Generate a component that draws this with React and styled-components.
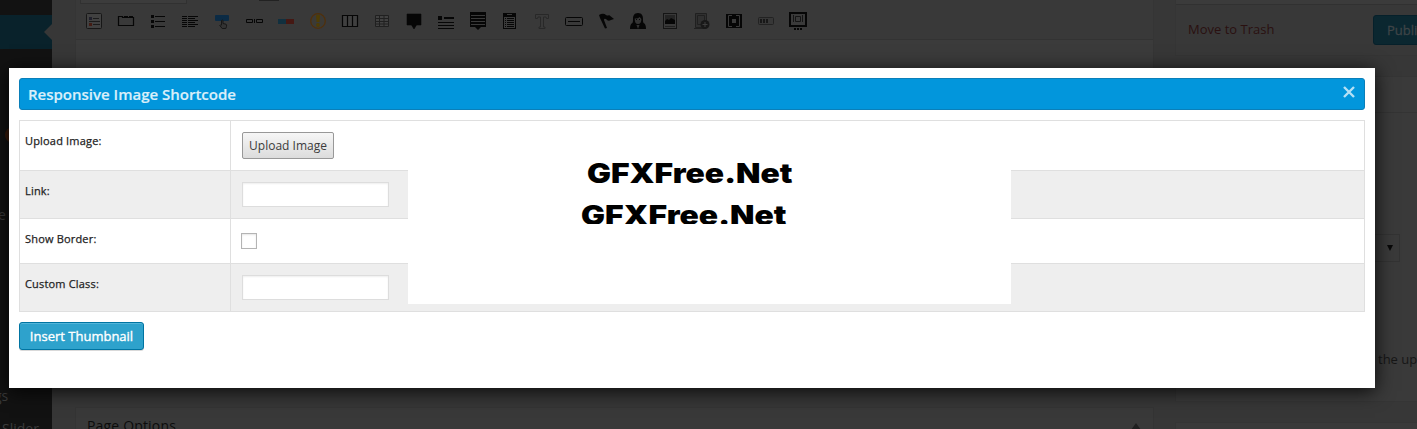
import React from 'react';
import styled, { createGlobalStyle } from 'styled-components';

const Global = createGlobalStyle`
  * { box-sizing: border-box; }
  body { margin: 0; background: #373737; font-family: "Open Sans", sans-serif; }
`;

const Screen = styled.div`
  position: relative;
  width: 1417px;
  height: 429px;
  overflow: hidden;
  display: flex;
  background: #373737;
`;

const Sidebar = styled.nav`
  width: 52px;
  flex: none;
  height: 429px;
  overflow: hidden;
  background: #121212;
  display: flex;
  flex-direction: column;
  color: #3a3a3a;
  font-size: 14px;
  line-height: 20px;
  white-space: nowrap;
`;

const ActiveItem = styled.div`
  height: 34px;
  flex: none;
  margin-top: 15px;
  background: #09222b;
  display: flex;
  align-items: center;
  justify-content: flex-end;
  &::after {
    content: '';
    border: 8px solid transparent;
    border-left: 0;
    border-right-color: #373737;
  }
`;

const Bubble = styled.i`
  width: 16px;
  height: 16px;
  flex: none;
  border-radius: 50%;
  background: #3a1a0a;
  margin: 78px 0 0 5px;
`;

const MenuText = styled.span`
  flex: none;
  margin-top: ${(p) => p.$gap}px;
  margin-left: ${(p) => p.$x}px;
`;

const Main = styled.main`
  width: 1079px;
  flex: none;
  margin-left: 23px;
  display: flex;
  flex-direction: column;
`;

const Editor = styled.section`
  height: 384px;
  flex: none;
  background: #3b3b3b;
  border: 1px solid #353535;
  border-width: 0 1px;
`;

const EditorTop = styled.div`
  height: 40px;
  background: #393939;
  border-bottom: 1px solid #333;
`;

const ModeTabs = styled.div`
  height: 4px;
  display: flex;
  align-items: flex-start;
  padding-left: 4px;
`;

const ModeBox = styled.div`
  width: 107px;
  height: 4px;
  background: #3c3c3c;
  border: 1px solid #313131;
  border-top: 0;
`;

const ModeMark = styled.div`
  width: 20px;
  height: 1px;
  margin-left: 72px;
  background: #222;
`;

const Toolbar = styled.div`
  display: flex;
  padding: 7px 0 0 2px;
`;

const Tool = styled.span`
  width: 32px;
  height: 20px;
  display: flex;
  justify-content: center;
  svg { display: block; }
`;

const OptionsPanel = styled.section`
  height: 40px;
  flex: none;
  margin-top: 23px;
  background: #393939;
  border: 1px solid #343434;
  display: flex;
  justify-content: space-between;
  padding: 8px 12px 0 11px;
  font-size: 14px;
  letter-spacing: 0.17px;
  line-height: 20px;
  color: #0c0c0c;
`;

const Toggle = styled.i`
  margin-top: 7px;
  width: 0;
  height: 0;
  border: 5px solid transparent;
  border-top: 0;
  border-bottom: 7px solid #202020;
`;

const Side = styled.aside`
  width: 260px;
  flex: none;
  margin-left: 21px;
  display: flex;
  flex-direction: column;
  font-size: 13px;
`;

const PublishBox = styled.section`
  height: 56px;
  flex: none;
  background: #383838;
  border: 1px solid #353535;
  border-top: 0;
`;

const PublishTop = styled.div`
  height: 4px;
  background: #3b3b3b;
`;

const PublishFooter = styled.div`
  height: 51px;
  border-top: 1px solid #313131;
  display: flex;
  justify-content: space-between;
  padding: 10px 7px 0 12px;
`;

const Trash = styled.span`
  color: #2a1010;
  line-height: 29px;
`;

const Publish = styled.span`
  width: 54px;
  height: 30px;
  border: 1px solid #06202a;
  border-radius: 3px;
  background: #0b2730;
  color: #3e4447;
  padding-left: 13px;
  -webkit-text-stroke: 0.3px currentColor;
  line-height: 29px;
  overflow: hidden;
`;

const SidePanel = styled.section`
  height: ${(p) => p.$h}px;
  flex: none;
  margin-top: 20px;
  background: #3a3a3a;
  border: 1px solid #353535;
  color: #161616;
`;

const PanelHead = styled.div`
  height: 36px;
  border-bottom: 1px solid #343434;
`;

const Select = styled.div`
  width: 213px;
  height: 28px;
  margin: 121px 0 0 11px;
  border: 1px solid #333;
  display: flex;
  justify-content: flex-end;
  align-items: center;
  padding-right: 6px;
  &::after {
    content: '';
    border: 3px solid transparent;
    border-top: 6px solid #080808;
    border-bottom: 0;
  }
`;

const Hint = styled.p`
  margin: 87px 0 0 202px;
  line-height: 20px;
  white-space: nowrap;
  overflow: hidden;
`;

const Modal = styled.div`
  position: absolute;
  left: 9px;
  top: 68px;
  width: 1366px;
  height: 320px;
  padding: 10px;
  background: #fff;
  box-shadow: 0 3px 18px rgba(0, 0, 0, 0.85);
`;

const TitleBar = styled.header`
  height: 32px;
  display: flex;
  justify-content: space-between;
  background: #0296dc;
  border: 1px solid #0a7fb9;
  border-radius: 3px;
  color: #d9effa;
  padding: 0 9px 0 8px;
  font-size: 15px;
  font-weight: 600;
  -webkit-text-stroke: 0.2px currentColor;
  line-height: 31px;
`;

const CloseIcon = styled.svg`
  display: block;
  margin-top: 7px;
`;

const Form = styled.div`
  margin-top: 10px;
  border: 1px solid #dfdfdf;
  height: 192px;
`;

const Row = styled.div`
  display: flex;
  height: ${(p) => p.$h}px;
  background: ${(p) => (p.$alt ? '#eee' : '#fff')};
  border-bottom: ${(p) => (p.$last ? 0 : '1px solid #dfdfdf')};
`;

const Label = styled.label`
  width: 211px;
  flex: none;
  border-right: 1px solid #dfdfdf;
  padding: 12px 0 0 5px;
  font-size: 11px;
  letter-spacing: 0.18px;
  -webkit-text-stroke: 0.25px currentColor;
  line-height: 16px;
  color: #222;
`;

const Field = styled.div`
  padding: 11px 0 0 ${(p) => p.$x || 11}px;
`;

const UploadButton = styled.button`
  display: block;
  width: 92px;
  height: 27px;
  padding: 0;
  border: 1px solid #989898;
  border-radius: 2px;
  background: linear-gradient(#f6f6f6, #dcdcdc);
  font: 12px/25px "Open Sans", sans-serif;
  color: #3c3c3c;
`;

const TextInput = styled.input`
  display: block;
  width: 147px;
  height: 25px;
  border: 1px solid #ddd;
  background: #fff;
  box-shadow: inset 0 1px 2px rgba(0, 0, 0, 0.07);
`;

const Check = styled.input`
  appearance: none;
  display: block;
  margin: 3px 0 0;
  width: 16px;
  height: 16px;
  border: 1px solid #b4b4b4;
  background: #fff;
  box-shadow: inset 0 1px 2px rgba(0, 0, 0, 0.1);
`;

const InsertButton = styled.button`
  display: block;
  margin-top: 10px;
  width: 125px;
  height: 28px;
  padding: 0;
  border: 1px solid #0074a2;
  border-radius: 3px;
  background: #2ea2cc;
  box-shadow: inset 0 1px 0 rgba(120, 200, 230, 0.5), 0 1px 0 rgba(0, 0, 0, 0.15);
  color: #fff;
  font: 13px/26px "Open Sans", sans-serif;
  -webkit-text-stroke: 0.35px currentColor;
`;

const Cover = styled.div`
  position: absolute;
  left: 399px;
  top: 54px;
  width: 603px;
  height: 182px;
  background: #fff;
`;

const Watermark = styled.div`
  height: ${(p) => p.$h}px;
  margin-left: ${(p) => p.$x}px;
  margin-top: ${(p) => p.$gap}px;
  overflow: hidden;
  font: 900 26.5px/32px Inter, sans-serif;
  color: #000;
  white-space: nowrap;
  span {
    display: inline-block;
    transform: scaleX(${(p) => p.$stretch});
    transform-origin: 0 0;
  }
`;

const K = '#060606';
const bars = (x, w, ys, h = 1, fill = K) =>
  ys.map((y) => <rect key={`${x}-${y}`} x={x} y={y} width={w} height={h} fill={fill} />);

const icons = [
  <>
    <rect x="2.5" y="2.5" width="15" height="15" rx="1" fill="#414141" stroke="#171717" />
    <path d="M5 6h3v3H5z" fill="#20202c" /><path d="M5 12h3v3H5z" fill="#431c14" />
    <path d="M9 7.5h6M5 10.5h11M9 13.5h7" stroke="#1b1b1b" />
  </>,
  <>
    <path d="M2.500 5.500v9h15v-8h-11v-1z" fill="none" stroke={K} strokeWidth="1.200" />
    <path d="M8 5h4v2H8zM13 5h4v2h-4z" fill={K} />
  </>,
  <>{bars(3, 3, [4, 9, 14], 3)}{bars(7, 10, [5, 10, 15])}</>,
  <>{bars(2, 5, [5, 7, 9, 11, 13, 15])}{bars(8, 10, [5, 9, 13])}{bars(8, 7, [7, 11, 15])}</>,
  <>
    <rect x="3" y="4" width="14" height="6" rx="1" fill="#0b2b45" />
    <path d="M9.500 14V9.500q1-1 1.500 0v3l3 .7q1 .3.500 2.300l-.7 2h-3.600L7.800 14.500q.3-1 1.700-.3" fill="#333" stroke="#171717" />
  </>,
  <path d="M2.500 8.500h6v3h-6zM12.500 8.500h6v3h-6zM10.500 8v4" fill="none" stroke={K} />,
  <><path d="M2 8h8v5H2z" fill="#11303f" /><path d="M10 8h8v5h-8z" fill="#451813" /></>,
  <>
    <circle cx="10" cy="10" r="7.300" fill="#3b3a36" stroke="#50300c" strokeWidth="1.300" />
    <path d="M8 4.500q2-1.500 4 0L11.400 11H8.600z" fill="#4f3d04" /><circle cx="10" cy="14" r="1.900" fill="#4f3d04" />
  </>,
  <path d="M2.500 4.500h15v11h-15zM7.500 4v12M12.500 4v12" fill="#404040" stroke={K} strokeWidth="1.200" />,
  <path d="M3.500 4.500h13v11h-13zM3 7.500h14M3 10.500h14M3 13h14M7.500 4v12M12 4v12" fill="#414141" stroke="#202020" />,
  <path d="M3 3h14v11h-4.500L10 18l-2.500-4H3z" fill={K} stroke={K} strokeLinejoin="round" strokeWidth=".6" />,
  <>{bars(2, 4, [5], 4)}{bars(8, 10, [6], 2)}{bars(2, 16, [11, 14, 17])}</>,
  <><path d="M2 1h16v15h-5l-3 3-3-3H2z" fill={K} />{bars(3, 14, [4, 7, 10, 13], 1, '#3a3a3a')}</>,
  <>
    <path d="M3 2h13v16H3z" fill={K} /><path d="M7 3.500h5" stroke="#3a3a3a" /><path d="M4 6h11v11H4z" fill="#3a3a3a" />
    {bars(5, 1, [7, 9, 11, 13, 15], 1, K)}{bars(7, 7, [7, 9, 11, 13, 15], 1, K)}
  </>,
  <path d="M3.500 3.500h13v4h-2l-.5-1.500h-2.500v10h1.500v1.500H7V16h1.500V6H6l-.5 1.500h-2z" fill="none" stroke="#282828" />,
  <><rect x="1.500" y="6.500" width="17" height="8" rx="1" fill="none" stroke={K} /><path d="M4 10.500h12" stroke={K} /></>,
  <path d="M3 4l2-1q3-1 5 1 2 1 3 0l5 4-3 1q-3 2-5-1-2-1-2 1l3 8-2 .5L4 7z" fill={K} />,
  <>
    <path d="M10 2c4 0 5 3 5 6 0 2 0 3 .6 4q2.400 1 2.400 6H2q0-5 2.400-6C5 11 5 10 5 8c0-3 1-6 5-6z" fill={K} />
    <path d="M6.700 7.500q3 .3 5-1.500l1.700 2q0 5-3.400 5t-3.300-5.500zM8.500 14h3L10 18z" fill="#333" />
    <path d="M8 8.500h1M11 8.500h1" stroke={K} />
  </>,
  <>
    <rect x="3.500" y="2.500" width="13" height="15" fill="#393939" stroke="#151515" />
    <path d="M5 4h10v9H5z" fill="#242424" /><path d="M5 10l2-2 2 1 2-2 4 2v4H5z" fill={K} /><path d="M5 15.500h10" stroke="#222" />
  </>,
  <>
    <path d="M3.500 2.500h11v14h-11zM5.500 4.500h7v9h-7zM2 17.500h10" fill="#303030" stroke="#202020" />
    <circle cx="13" cy="13.500" r="4.500" fill="#181818" /><path d="M13 11v5M10.500 13.500h5" stroke="#3d3d3d" />
  </>,
  <>
    <path d="M2 3h16v14H2z" fill={K} />
    <path d="M8 4.500H4.500v11H8M12 4.500h3.500v11H12" fill="none" stroke="#3a3a3a" />
    <path d="M8 8h4v4H8z" fill="#3a3a3a" />
  </>,
  <>
    <rect x="2.500" y="6.500" width="15" height="7" rx="1" fill="#373737" stroke="#222" />
    {bars(4, 2, [8], 4, '#181818')}{bars(7, 2, [8], 4, '#181818')}{bars(10, 2, [8], 4, '#181818')}
  </>,
  <>
    <path d="M2 2h16v13H2z" fill="#3a3a3a" stroke={K} strokeWidth="2" />
    <path d="M7.500 5.500h5v5h-5zM5.500 4v7M14.500 4v7" fill="none" stroke="#151515" />
    {bars(6, 2, [17], 2)}{bars(9, 2, [17], 2)}{bars(12, 2, [17], 2)}
  </>,
];

export default function App() {
  return (
    <Screen>
      <Global />
      <Sidebar>
        <ActiveItem />
        <Bubble />
        <MenuText $gap={62} $x={-2}>e</MenuText>
        <MenuText $gap={161} $x={-6}>gs</MenuText>
        <MenuText $gap={13} $x={2}>Slider</MenuText>
      </Sidebar>
      <Main>
        <Editor>
          <EditorTop>
            <ModeTabs><ModeBox /><ModeMark /></ModeTabs>
            <Toolbar>
              {icons.map((icon, i) => (
                <Tool key={i}><svg width="20" height="20" viewBox="0 0 20 20">{icon}</svg></Tool>
              ))}
            </Toolbar>
          </EditorTop>
        </Editor>
        <OptionsPanel>Page Options<Toggle /></OptionsPanel>
      </Main>
      <Side>
        <PublishBox>
          <PublishTop />
          <PublishFooter><Trash>Move to Trash</Trash><Publish>Publish</Publish></PublishFooter>
        </PublishBox>
        <SidePanel $h={326}>
          <PanelHead />
          <Select />
          <Hint>the upper</Hint>
        </SidePanel>
        <SidePanel $h={40} />
      </Side>
      <Modal>
        <TitleBar>
          Responsive Image Shortcode
          <CloseIcon width="12" height="12" viewBox="0 0 12 12">
            <path d="M1 1l10 10M11 1L1 11" stroke="#b5e0f5" strokeWidth="2.400" />
          </CloseIcon>
        </TitleBar>
        <Form>
          <Row $h={50}><Label>Upload Image:</Label><Field><UploadButton>Upload Image</UploadButton></Field></Row>
          <Row $h={48} $alt><Label>Link:</Label><Field><TextInput /></Field></Row>
          <Row $h={45}><Label>Show Border:</Label><Field $x={10}><Check type="checkbox" /></Field></Row>
          <Row $h={47} $alt $last><Label>Custom Class:</Label><Field><TextInput /></Field></Row>
        </Form>
        <InsertButton>Insert Thumbnail</InsertButton>
        <Cover>
          <Watermark $h={36} $x={178.5} $gap={35} $stretch={1.2}><span>GFXFree.Net</span></Watermark>
          <Watermark $h={25} $x={172.500} $gap={6} $stretch={1.2}><span>GFXFree.Net</span></Watermark>
        </Cover>
      </Modal>
    </Screen>
  );
}
